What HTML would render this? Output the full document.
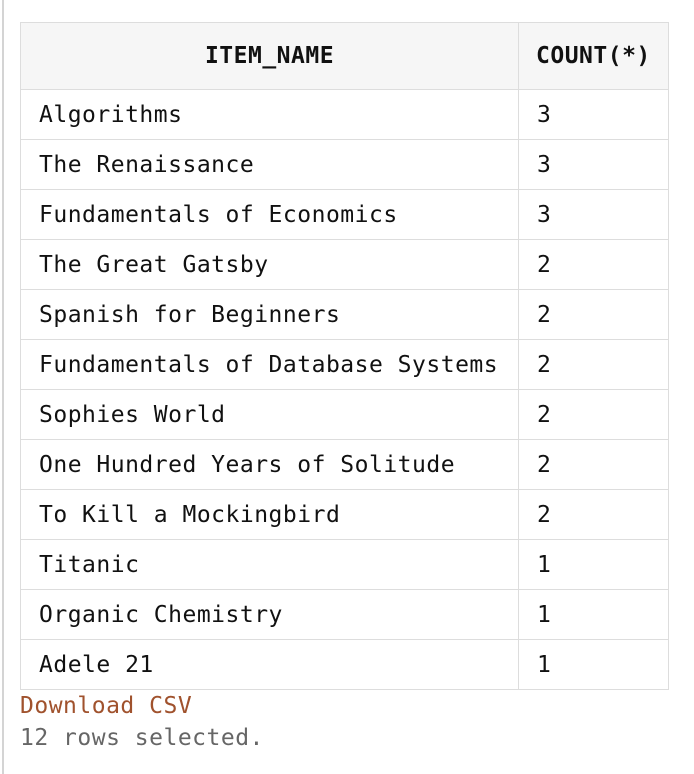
<!DOCTYPE html>
<html><head><style>
html,body{margin:0;padding:0;background:#fff;width:694px;height:774px;overflow:hidden}
.bar{position:absolute;left:2px;top:0;width:2px;height:774px;background:#d4d4d4}
table{position:absolute;left:20px;top:22px;width:648px;table-layout:fixed;border-collapse:collapse;font-family:"DejaVu Sans Mono","Liberation Mono",monospace;font-size:23px;letter-spacing:0.5px;color:#111}
td,th{border:1px solid #ddd;padding:0 0 0 18px;height:49px;text-align:left;white-space:nowrap;overflow:hidden}
th{height:66px;background:#f6f6f6;font-weight:bold;text-align:center;padding:0}
.a{position:absolute;left:20px;top:693px;font-family:"DejaVu Sans Mono",monospace;font-size:23px;letter-spacing:0.5px;color:#a0522d}
.s{position:absolute;left:20px;top:725px;font-family:"DejaVu Sans Mono",monospace;font-size:23px;letter-spacing:0.5px;color:#666}
</style></head><body>
<div class="bar"></div>
<table>
<colgroup><col style="width:498px"><col style="width:150px"></colgroup>
<tr><th>ITEM_NAME</th><th style="padding-left:17px;text-align:left">COUNT(*)</th></tr>
<tr><td>Algorithms</td><td>3</td></tr>
<tr><td>The Renaissance</td><td>3</td></tr>
<tr><td>Fundamentals of Economics</td><td>3</td></tr>
<tr><td>The Great Gatsby</td><td>2</td></tr>
<tr><td>Spanish for Beginners</td><td>2</td></tr>
<tr><td>Fundamentals of Database Systems</td><td>2</td></tr>
<tr><td>Sophies World</td><td>2</td></tr>
<tr><td>One Hundred Years of Solitude</td><td>2</td></tr>
<tr><td>To Kill a Mockingbird</td><td>2</td></tr>
<tr><td>Titanic</td><td>1</td></tr>
<tr><td>Organic Chemistry</td><td>1</td></tr>
<tr><td>Adele 21</td><td>1</td></tr>
</table>
<div class="a">Download CSV</div>
<div class="s">12 rows selected.</div>
</body></html>
